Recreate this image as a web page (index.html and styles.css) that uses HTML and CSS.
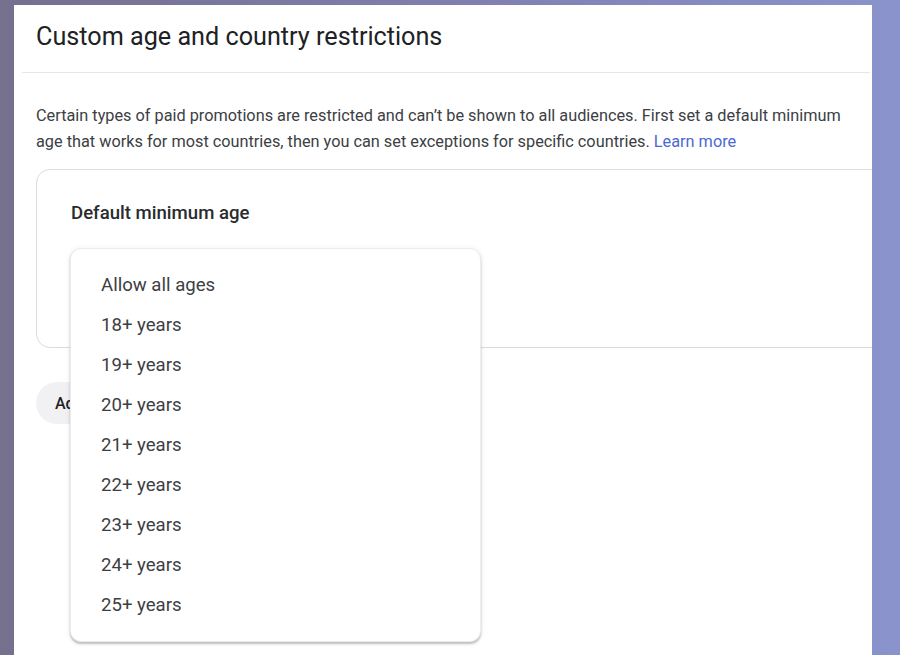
FILE: index.html
```html
<!DOCTYPE html>
<html lang="en">
<head>
<meta charset="utf-8">
<title>Custom age and country restrictions</title>
<link rel="stylesheet" href="styles.css">
</head>
<body>
<div class="panel">
  <header class="header">
    <h1 class="title">Custom age and country restrictions</h1>
  </header>
  <div class="content">
    <p class="intro">Certain types of paid promotions are restricted and can’t be shown to all audiences. First set a default minimum age that works for most countries, then you can set exceptions for specific countries. <a class="link" href="#">Learn more</a></p>
    <section class="card">
      <h2 class="label">Default minimum age</h2>
      <div class="select">
        <ul class="menu">
          <li class="item">Allow all ages</li>
          <li class="item">18+ years</li>
          <li class="item">19+ years</li>
          <li class="item">20+ years</li>
          <li class="item">21+ years</li>
          <li class="item">22+ years</li>
          <li class="item">23+ years</li>
          <li class="item">24+ years</li>
          <li class="item">25+ years</li>
        </ul>
      </div>
    </section>
    <button class="add-btn" type="button">Add country</button>
  </div>
</div>
</body>
</html>
```

FILE: styles.css
```css
* { box-sizing: border-box; }
html, body { height: 100%; }
body {
  margin: 0;
  background: linear-gradient(90deg, #76708f 0%, #7f7fae 50%, #8a93cc 100%);
  font-family: Roboto, "Noto Sans", sans-serif;
  overflow: hidden;
}
.panel {
  margin: 5px 0 0 14px;
  width: 858px;
  height: 650px;
  background: #ffffff;
  overflow: hidden;
}
.header {
  margin: 0 2px 0 8px;
  padding: 18px 14px 21px;
  border-bottom: 1px solid #e6e6e9;
}
.title {
  margin: 0;
  font-size: 25.2px;
  line-height: 28px;
  font-weight: 400;
  color: #202124;
}
.content {
  padding: 30px 0 0 22px;
}
.intro {
  margin: 0;
  width: 815px;
  font-size: 16.3px;
  line-height: 26px;
  color: #3c4043;
}
.link {
  color: #4a69d4;
  text-decoration: none;
}
.card {
  position: relative;
  margin-top: 14px;
  width: 900px;
  height: 179px;
  border: 1px solid #dcdce0;
  border-radius: 14px;
  padding: 32px 0 0 34px;
}
.label {
  margin: 0;
  font-size: 18.6px;
  line-height: 22px;
  font-weight: 500;
  color: #2a2b2e;
}
.select {
  position: relative;
  margin-top: 24px;
  margin-left: -1px;
  width: 411px;
  height: 54px;
}
.menu {
  position: absolute;
  left: 0;
  top: 0;
  z-index: 2;
  width: 411px;
  margin: 0;
  padding: 16px 0;
  list-style: none;
  background: #ffffff;
  border: 1px solid #ececef;
  border-radius: 11px;
  box-shadow: 0 2px 2px rgba(60, 64, 67, 0.28), 0 1px 5px rgba(60, 64, 67, 0.12);
}
.item {
  height: 40px;
  line-height: 40px;
  padding-left: 30px;
  font-size: 18.6px;
  color: #3c4043;
}
.add-btn {
  margin-top: 34px;
  height: 42px;
  padding: 0 19px;
  border: none;
  border-radius: 21px;
  background: #f1f1f3;
  font-family: Roboto, "Noto Sans", sans-serif;
  font-size: 16px;
  font-weight: 500;
  color: #202124;
}
```
